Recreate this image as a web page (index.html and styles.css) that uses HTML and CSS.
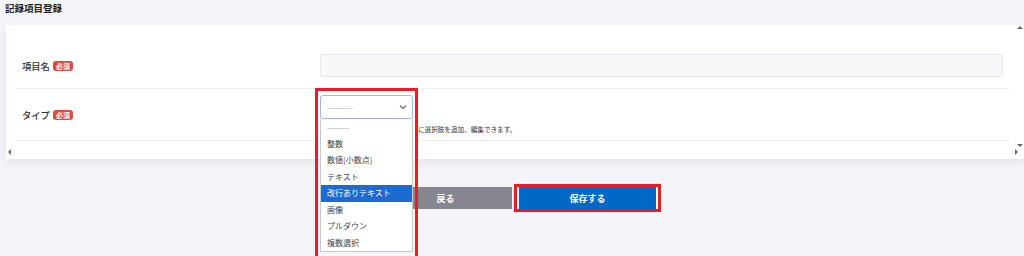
FILE: index.html
```html
<!DOCTYPE html>
<html lang="ja">
<head>
    <meta charset="UTF-8">
    <meta name="viewport" content="width=device-width, initial-scale=1.0">
    <title>記録項目登録</title>
    <link rel="stylesheet" href="styles.css">
</head>
<body>
    <h1 class="page-title">記録項目登録</h1>

    <div class="card">
        <div class="form-body">
            <div class="form-row row-name">
                <div class="form-label">項目名<span class="badge">必須</span></div>
                <div class="form-field">
                    <input type="text" class="text-input">
                </div>
            </div>
            <div class="form-row row-type">
                <div class="form-label">タイプ<span class="badge">必須</span></div>
                <div class="form-field">
                    <div class="select-box">
                        <span>---------</span>
                        <svg class="chevron" width="8" height="6" viewBox="0 0 8 6"><path d="M1 1.5 4 4.5 7 1.5" fill="none" stroke="#666" stroke-width="1.2"/></svg>
                    </div>
                    <!-- 先頭部分は開いたプルダウンに隠れている -->
                    <p class="help-text">に選択肢を追加、編集できます。</p>
                </div>
            </div>
        </div>
        <div class="hscroll"></div>

        <!-- スクロールバーの矢印 -->
        <span class="arrow arrow-up"></span>
        <span class="arrow arrow-down"></span>
        <span class="arrow arrow-left"></span>
        <span class="arrow arrow-right"></span>
    </div>

    <div class="actions">
        <button class="btn btn-back">戻る</button>
        <div class="highlight save-highlight">
            <button class="btn btn-save">保存する</button>
        </div>
    </div>

    <!-- 開いた状態のプルダウン -->
    <div class="highlight dropdown-highlight">
        <div class="dropdown-select">
            <span>---------</span>
            <svg class="chevron" width="8" height="6" viewBox="0 0 8 6"><path d="M1 1.5 4 4.5 7 1.5" fill="none" stroke="#666" stroke-width="1.2"/></svg>
        </div>
        <ul class="dropdown-list">
            <li>---------</li>
            <li>整数</li>
            <li>数値(小数点)</li>
            <li>テキスト</li>
            <li class="active">改行ありテキスト</li>
            <li>画像</li>
            <li>プルダウン</li>
            <li>複数選択</li>
        </ul>
    </div>
</body>
</html>
```

FILE: styles.css
```css
/* 全体 */
body {
    margin: 0;
    padding: 0 0 0 5px;
    height: 256px;
    overflow: hidden;
    background: #f4f5f9;
    font-family: "Noto Sans CJK JP", "Noto Sans", sans-serif;
    color: #333;
    position: relative;
}

.page-title {
    margin: 0;
    font-size: 9.5px;
    line-height: 17px;
    font-weight: bold;
    color: #222;
}

/* カード */
.card {
    position: relative;
    margin: 8px 0 0 1px;
    background: #fff;
    box-shadow: 0 4px 10px rgba(0, 0, 0, 0.07);
}

.form-body {
    padding: 18px 14px 0 9px;
}

.form-row {
    display: flex;
    align-items: center;
    border-bottom: 1px solid #eceef3;
}

.row-name {
    height: 45px;
}

.row-type {
    height: 51px;
}

.form-label {
    width: 298px;
    padding-left: 7px;
    font-size: 9.3px;
    font-weight: 500;
    color: #333;
    display: flex;
    align-items: center;
}

.badge {
    display: inline-block;
    margin-left: 3px;
    padding: 0 3px;
    height: 10px;
    line-height: 10px;
    font-size: 7px;
    font-weight: bold;
    color: #fff;
    background: #e5493d;
    border-radius: 3px;
}

.form-field {
    flex: 1;
    margin-right: 7px;
}

.text-input {
    display: block;
    width: 100%;
    height: 23px;
    box-sizing: border-box;
    border: 1px solid #e6e7ec;
    border-radius: 3px;
    background: #f8f8fa;
}

.row-type .form-field {
    align-self: flex-start;
    padding-top: 7px;
}

.select-box {
    width: 93px;
    height: 23px;
    box-sizing: border-box;
    border: 1px solid #d5d7de;
    border-radius: 3px;
}

.help-text {
    margin: 3px 0 0;
    padding-left: 98px;
    font-size: 6.6px;
    line-height: 14px;
    color: #333;
}

.hscroll {
    height: 18px;
}

/* スクロールバー矢印 */
.arrow {
    position: absolute;
    width: 0;
    height: 0;
    border: 3px solid transparent;
}

.arrow-up {
    top: 1px;
    right: 1px;
    border-bottom-color: #666;
    border-top-width: 0;
}

.arrow-down {
    bottom: 12px;
    right: 1px;
    border-top-color: #666;
    border-bottom-width: 0;
}

.arrow-left {
    bottom: 4px;
    left: 2px;
    border-right-color: #666;
    border-left-width: 0;
}

.arrow-right {
    bottom: 4px;
    right: 6px;
    border-left-color: #666;
    border-right-width: 0;
}

/* ボタン */
.actions {
    display: flex;
    align-items: center;
    margin: 25px 0 0 374px;
}

.btn {
    height: 22px;
    border: none;
    font-family: inherit;
    font-size: 9px;
    font-weight: bold;
    color: #fff;
    cursor: pointer;
}

.btn-back {
    width: 133px;
    background: #868690;
}

.highlight {
    border: 3px solid #e61e2a;
}

.save-highlight {
    margin-left: 2px;
    display: flex;
}

.btn-save {
    width: 141px;
    background: #0068c7;
    border-left: 2px solid #fff;
    border-right: 2px solid #fff;
}

/* プルダウン */
.dropdown-highlight {
    position: absolute;
    left: 315px;
    top: 88px;
    width: 93px;
    height: 168px;
    padding: 4px 2px 0;
}

.dropdown-select,
.select-box {
    display: flex;
    align-items: center;
    justify-content: space-between;
    padding: 0 5px 0 6px;
    font-size: 7px;
    color: #888;
    letter-spacing: 0.5px;
}

.dropdown-select {
    height: 24px;
    box-sizing: border-box;
    background: #fff;
    border: 1px solid #9fb6e6;
    border-radius: 3px;
}

.dropdown-list {
    margin: 0;
    padding: 0;
    list-style: none;
    background: #fff;
    border: 1px solid #c8c8c8;
    border-top: none;
}

.dropdown-list li {
    height: 16.5px;
    line-height: 16.5px;
    padding-left: 6px;
    font-size: 8px;
    color: #444;
}

.dropdown-list li:first-child {
    color: #888;
    font-size: 7px;
}

.dropdown-list li.active {
    background: #1c6bd3;
    color: #fff;
}
```
